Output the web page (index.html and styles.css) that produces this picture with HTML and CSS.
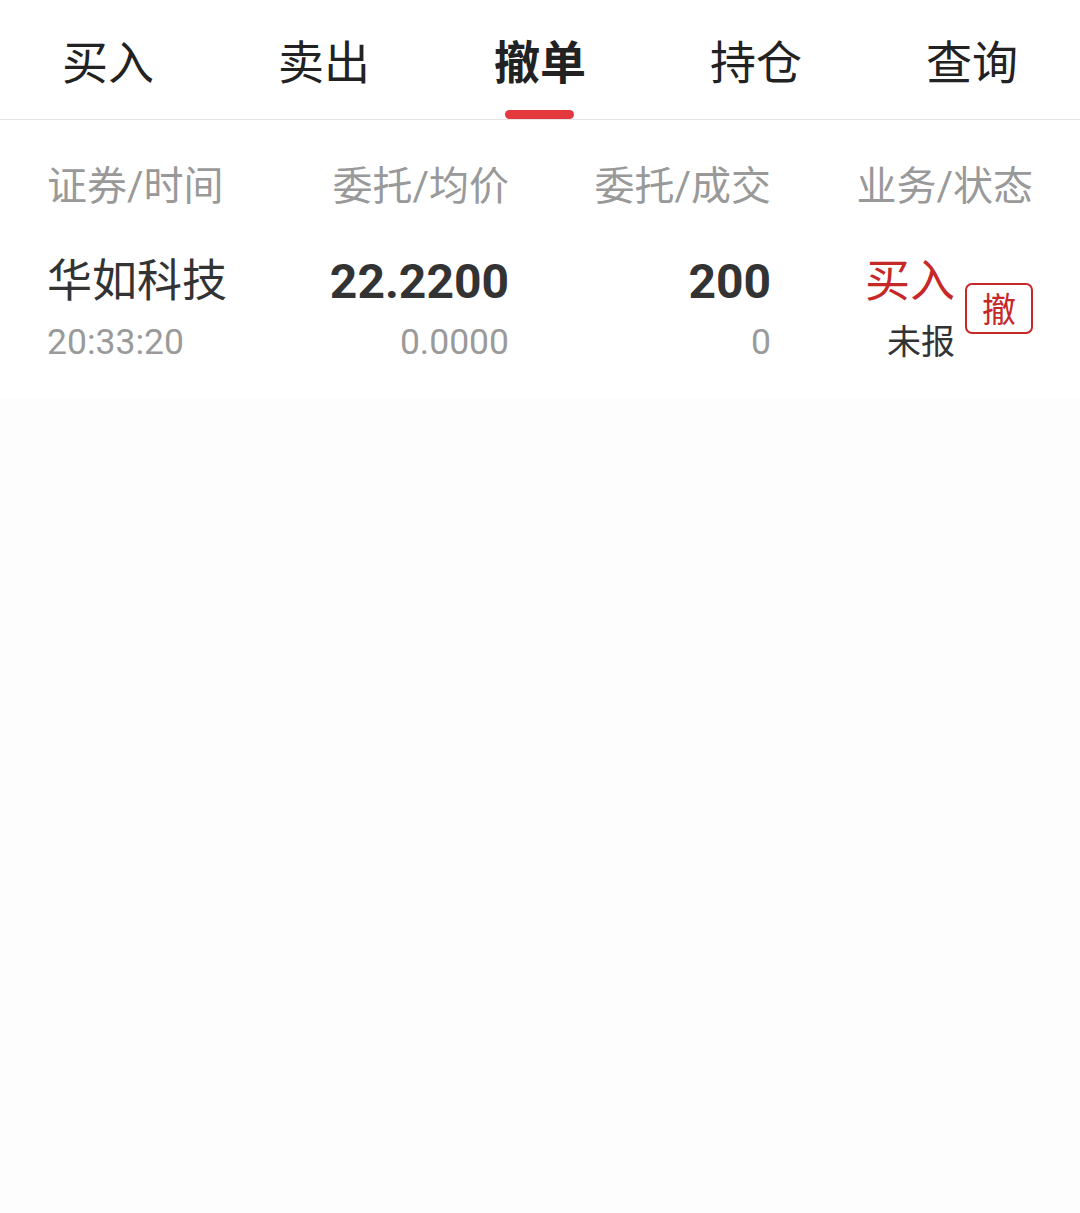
FILE: index.html
```html
<!DOCTYPE html>
<html lang="zh-CN">
<head>
    <meta charset="UTF-8">
    <meta name="viewport" content="width=device-width, initial-scale=1.0">
    <title>撤单</title>
    <link rel="stylesheet" href="styles.css">
</head>
<body>
    <div class="tabs">
        <div class="tab">买入</div>
        <div class="tab">卖出</div>
        <div class="tab active">撤单</div>
        <div class="tab">持仓</div>
        <div class="tab">查询</div>
    </div>

    <div class="list">
        <div class="grid head">
            <div class="cell left">证券/时间</div>
            <div class="cell">委托/均价</div>
            <div class="cell">委托/成交</div>
            <div class="cell">业务/状态</div>
        </div>

        <div class="grid row">
            <div class="cell left">
                <div class="main name">华如科技</div>
                <div class="sub">20:33:20</div>
            </div>
            <div class="cell">
                <div class="main num">22.2200</div>
                <div class="sub">0.0000</div>
            </div>
            <div class="cell">
                <div class="main num">200</div>
                <div class="sub">0</div>
            </div>
            <div class="cell status">
                <div class="status-text">
                    <div class="main buy">买入</div>
                    <div class="sub state">未报</div>
                </div>
                <button class="cancel">撤</button>
            </div>
        </div>
    </div>
</body>
</html>
```

FILE: styles.css
```css
body {
    margin: 0;
    background-color: #fdfdfd;
    font-family: Roboto, "Noto Sans CJK SC", sans-serif;
    color: #333;
}

.tabs {
    display: grid;
    grid-template-columns: repeat(5, 1fr);
    height: 119px;
    background: #fff;
    border-bottom: 1px solid #e4e4e4;
}

.tab {
    position: relative;
    display: flex;
    align-items: center;
    justify-content: center;
    padding-bottom: 2px;
    font-size: 46px;
    color: #222;
}

.tab.active {
    font-weight: bold;
}

.tab.active::after {
    content: "";
    position: absolute;
    left: 50%;
    bottom: 0;
    width: 69px;
    height: 9px;
    margin-left: -35px;
    background: #e5383e;
    border-radius: 5px;
}

.list {
    background: #fff;
    padding: 0 47px 26px;
}

.grid {
    display: grid;
    grid-template-columns: 200px 262px 262px 262px;
}

.cell {
    text-align: right;
}

.cell.left {
    text-align: left;
}

.head {
    padding-top: 44px;
    font-size: 40px;
    line-height: 46px;
    color: #999;
}

.row {
    padding-top: 42px;
}

.main {
    font-size: 45px;
    line-height: 60px;
    color: #333;
}

.num {
    font-size: 48px;
    font-weight: bold;
}

.sub {
    font-size: 35.5px;
    line-height: 60px;
    color: #9a9a9a;
}

.status {
    display: flex;
    justify-content: flex-end;
    align-items: center;
    gap: 10px;
}

.buy {
    color: #c62828;
}

.state {
    font-size: 34px;
    color: #333;
}

.cancel {
    width: 68px;
    height: 51px;
    padding: 0;
    margin-top: -8px;
    background: #fff;
    border: 2px solid #c62828;
    border-radius: 7px;
    color: #c62828;
    font-family: "Noto Sans CJK SC", sans-serif;
    font-size: 34px;
    line-height: 1;
}
```
